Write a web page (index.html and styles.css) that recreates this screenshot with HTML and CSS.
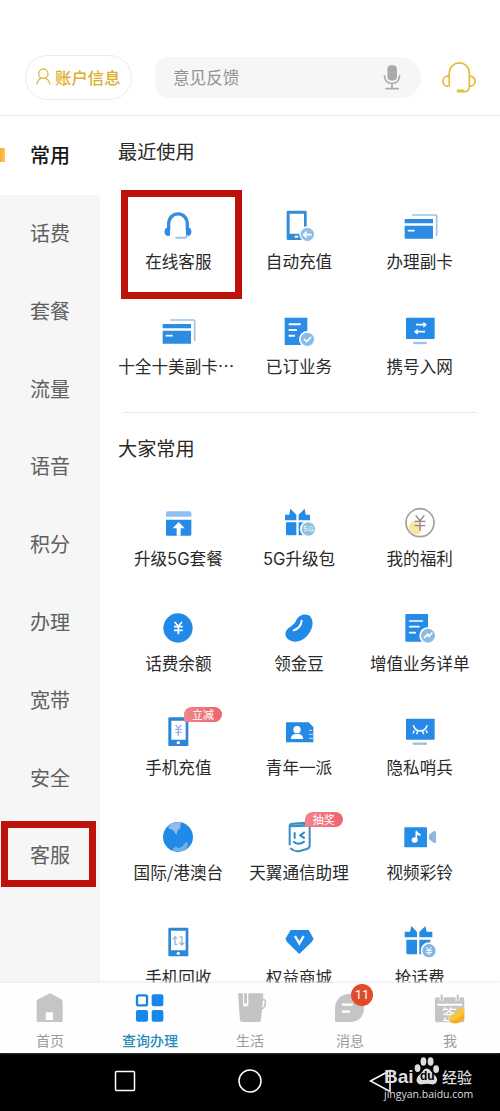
FILE: index.html
```html
<!DOCTYPE html>
<html lang="zh-CN">
<head>
<meta charset="utf-8">
<title>查询办理</title>
<link rel="stylesheet" href="styles.css">
</head>
<body>
<div class="phone">
  <header class="header">
    <div class="account">
      <svg class="account-icon" viewBox="0 0 45 54"><circle cx="22" cy="17" r="14"/><path d="M3 50C4 38 10 32 17 30M27 30C35 33 40 39 42 50"/></svg>
      <span>账户信息</span>
    </div>
    <div class="search">
      <span>意见反馈</span>
      <svg class="mic" viewBox="0 0 54 76"><rect x="13" y="1" width="29" height="46" rx="12" fill="#aaa"/><path d="M4 33C4 64 50 64 50 33M27 56V71M9 72H46" fill="none" stroke="#aaa" stroke-width="5" stroke-linecap="round"/></svg>
    </div>
    <svg class="service" viewBox="0 0 106 100"><path d="M25 78V38C25 -5 86 -5 86 38V77C86 91 78 93 69 93H48M25 45C-1 45 0 77 22 77M86 45C110 48 107 76 88 76M48 89H69" fill="none" stroke="#e0bd36" stroke-width="5"/></svg>
  </header>

  <main class="main">
    <nav class="side">
      <div class="side-item active">常用</div>
      <div class="side-item">话费</div>
      <div class="side-item">套餐</div>
      <div class="side-item">流量</div>
      <div class="side-item">语音</div>
      <div class="side-item">积分</div>
      <div class="side-item">办理</div>
      <div class="side-item">宽带</div>
      <div class="side-item">安全</div>
      <div class="side-item">客服<i class="mark mark-side"></i></div>
    </nav>

    <div class="content">
      <h2 class="title">最近使用</h2>
      <div class="grid">
        <div class="cell">
          <svg class="icon" viewBox="0 0 120 120"><path d="M32 72V55C32 13 88 13 88 55V72" fill="none" stroke="#398fdb" stroke-width="10"/><path d="M28 65C17 65 17 89 28 89H36V65ZM92 65C103 65 103 89 92 89H84V65Z" fill="#2b8ce6"/><path d="M90 88L82 95H52" fill="none" stroke="#9cc5eb" stroke-width="6"/></svg>
          <span>在线客服</span><i class="mark mark-cell"></i>
        </div>
        <div class="cell">
          <svg class="icon" viewBox="0 0 120 120"><path fill-rule="evenodd" d="M27 14H79Q83 14 83 18V102H27Q23 102 23 98V18Q23 14 27 14ZM32 23V83H75V23Z" fill="#348bd7"/><path d="M47 92H58" stroke="#fff" stroke-width="6"/><circle cx="85" cy="85" r="24" fill="#fff"/><circle cx="85" cy="85" r="20" fill="#91bfe6"/><path d="M98 86H75M83 77L74 86L83 94" fill="none" stroke="#fff" stroke-width="5"/></svg>
          <span>自动充值</span>
        </div>
        <div class="cell">
          <svg class="icon" viewBox="0 0 120 120"><path d="M14 39H99V52H14ZM14 59H99V98H14Z" fill="#2d8be3"/><path d="M36 27H107Q110 27 110 31V89" fill="none" stroke="#9bc4e8" stroke-width="5"/><path d="M23 74H44" stroke="#fff" stroke-width="5"/></svg>
          <span>办理副卡</span>
        </div>
        <div class="cell">
          <svg class="icon" viewBox="0 0 120 120"><path d="M14 39H99V52H14ZM14 59H99V98H14Z" fill="#2d8be3"/><path d="M36 27H107Q110 27 110 31V89" fill="none" stroke="#9bc4e8" stroke-width="5"/><path d="M23 74H44" stroke="#fff" stroke-width="5"/></svg>
          <span class="clipped">十全十美副卡…</span>
        </div>
        <div class="cell">
          <svg class="icon" viewBox="0 0 120 120"><rect x="17" y="20" width="68" height="82" rx="2" fill="#2b8de8"/><path d="M29 40H65M29 57H54M29 74H48" stroke="#fff" stroke-width="6"/><circle cx="85" cy="85" r="25" fill="#fff"/><circle cx="85" cy="85" r="20" fill="#88bbe8"/><path d="M75 84L83 92L96 78" fill="none" stroke="#fff" stroke-width="5"/></svg>
          <span>已订业务</span>
        </div>
        <div class="cell">
          <svg class="icon" viewBox="0 0 120 120"><rect x="18" y="20" width="86" height="64" rx="2" fill="#268ae8"/><path d="M40 96H80" stroke="#98c2e9" stroke-width="7"/><path d="M48 41H74M46 62H75" stroke="#fff" stroke-width="5"/><path d="M70 32L81 41L70 50ZM53 53L42 62L53 71Z" fill="#fff"/></svg>
          <span>携号入网</span>
        </div>
      </div>
      <div class="divider"></div>
      <h2 class="title">大家常用</h2>
      <div class="grid">
        <div class="cell">
          <svg class="icon" viewBox="0 0 120 120"><path d="M29 25H95Q100 25 100 30V41H24V30Q24 25 29 25Z" fill="#8ebfee"/><path d="M24 50H100V94Q100 98 96 98H28Q24 98 24 94Z" fill="#258ae8"/><path d="M62 57L80 76H68V98H56V76H44Z" fill="#fff"/></svg>
          <span>升级<span class="wide">5G</span>套餐</span>
        </div>
        <div class="cell">
          <svg class="icon" viewBox="0 0 120 120"><path d="M18 35H31L34 17L52 35V52H18ZM59 35L77 17L80 35H93V52H59ZM21 58H52V97H26Q21 97 21 92ZM59 58H91V97H59Z" fill="#258ae8"/><circle cx="88" cy="78" r="25" fill="#fff"/><circle cx="88" cy="78" r="20" fill="#91bfe0"/><path d="M84 70H76V77Q86 74 85 81Q84 86 75 83M102 73Q92 66 90 78Q90 88 102 84V79H96" fill="none" stroke="#e8f5fb" stroke-width="3"/></svg>
          <span><span class="wide">5G</span>升级包</span>
        </div>
        <div class="cell">
          <svg class="icon" viewBox="0 0 120 120"><circle cx="60" cy="59" r="42" fill="#fff" stroke="#a2a09d" stroke-width="5"/><path d="M26 75C28 55 48 47 57 61C67 76 67 94 50 94C36 94 26 86 26 75Z" fill="#fee4a4"/><path d="M47 37L60 53L73 37M60 53V83M44 55H76M44 68H76" fill="none" stroke="#8a8884" stroke-width="4"/></svg>
          <span>我的福利</span>
        </div>
        <div class="cell">
          <svg class="icon" viewBox="0 0 120 120"><circle cx="60" cy="60" r="44" fill="#218ae9"/><path d="M50 42L61 55L72 42M61 54V79M48 56H74M48 67H74" fill="none" stroke="#fff" stroke-width="5"/></svg>
          <span>话费余额</span>
        </div>
        <div class="cell">
          <svg class="icon" viewBox="0 0 120 120"><path d="M53 34C63 17 84 16 95 27C107 43 99 68 84 84C69 100 48 106 32 97C18 90 15 73 26 63C36 54 47 51 53 34Z" fill="#218ae9"/><path d="M68 38Q67 59 44 67" fill="none" stroke="#fff" stroke-width="6" stroke-linecap="round"/></svg>
          <span>领金豆</span>
        </div>
        <div class="cell">
          <svg class="icon" viewBox="0 0 120 120"><rect x="16" y="18" width="68" height="83" rx="2" fill="#268be7"/><path d="M29 39H67M29 56H57M29 74H46" stroke="#fff" stroke-width="5" stroke-linecap="round"/><circle cx="84" cy="83" r="26" fill="#fff"/><circle cx="84" cy="83" r="21" fill="#8bbbe1"/><path d="M72 90L83 79L87 85L97 74" fill="none" stroke="#fff" stroke-width="5"/></svg>
          <span>增值业务详单</span>
        </div>
        <div class="cell">
          <svg class="icon" viewBox="0 0 120 120"><path fill-rule="evenodd" d="M34 16H88Q91 16 91 19V102H34Q31 102 31 99V19Q31 16 34 16ZM40 26V83H83V26Z" fill="#2c86d3"/><circle cx="61" cy="92" r="5" fill="#fff"/><path d="M53 39L61 49L70 39M61 49V71M52 52H71M52 61H71" fill="none" stroke="#9dafea" stroke-width="4"/></svg>
          <b class="badge">立减</b>
          <span>手机充值</span>
        </div>
        <div class="cell">
          <svg class="icon" viewBox="0 0 120 120"><path d="M21 31H89L103 45V91H21Z" fill="#2689e4"/><circle cx="54" cy="53" r="11" fill="#fff"/><path d="M35 81Q37 68 48 66H60Q71 68 73 81Z" fill="#fff"/><path d="M90 55H99M90 67H103M90 79H103" stroke="#9ed0f4" stroke-width="4"/></svg>
          <span>青年一派</span>
        </div>
        <div class="cell">
          <svg class="icon" viewBox="0 0 120 120"><rect x="18" y="20" width="86" height="63" rx="2" fill="#2689e7"/><path d="M38 95H81" stroke="#98bfdf" stroke-width="7"/><path d="M40 40Q45 57 60 57Q76 57 82 40M43 56L39 64M53 58L50 67M68 58L71 67M78 55L82 63" fill="none" stroke="#fff" stroke-width="4.5"/></svg>
          <span>隐私哨兵</span>
        </div>
        <div class="cell">
          <svg class="icon" viewBox="0 0 120 120"><circle cx="60" cy="60" r="45" fill="#218ae9"/><path d="M35 23Q47 14 69 16L66 35L60 38L55 53L45 39L31 34Z" fill="#93bdeb"/><path d="M41 99L54 88L61 94L72 89L84 74L91 82L85 97Q65 109 41 99Z" fill="#72aeea"/></svg>
          <span>国际/港澳台</span>
        </div>
        <div class="cell">
          <svg class="icon" viewBox="0 0 120 120"><path d="M32 85V25Q33 21 39 20L79 17Q92 18 92 27V87Q91 94 83 96L63 102Q48 106 34 94" fill="none" stroke="#398dc0" stroke-width="6"/><path d="M34 27L84 25" stroke="#398dc0" stroke-width="8"/><path d="M47 46V65M77 45L64 55L77 64M43 73Q56 88 77 73" fill="none" stroke="#258acb" stroke-width="6"/></svg>
          <b class="badge">抽奖</b>
          <span>天翼通信助理</span>
        </div>
        <div class="cell">
          <svg class="icon" viewBox="0 0 120 120"><rect x="13" y="31" width="68" height="60" rx="2" fill="#278be8"/><path d="M87 53L102 41Q108 41 108 46V74Q108 79 102 78L87 67Z" fill="#8bb8e3"/><path d="M49 43V68" stroke="#fff" stroke-width="5"/><path d="M49 40Q53 48 62 51V57Q52 55 49 50Z" fill="#fff"/><ellipse cx="44" cy="69" rx="9" ry="8" fill="#fff"/></svg>
          <span>视频彩铃</span>
        </div>
        <div class="cell">
          <svg class="icon" viewBox="0 0 120 120"><path fill-rule="evenodd" d="M34 17H88Q91 17 91 20V103H34Q31 103 31 100V20Q31 17 34 17ZM39 26V85H83V26Z" fill="#2c87d9"/><circle cx="61" cy="94" r="5" fill="#fff"/><path d="M51 47V67H58M44 52L51 44L57 50M65 45H72V67M64 61L71 69L79 62" fill="none" stroke="#9eb6cf" stroke-width="4"/></svg>
          <span>手机回收</span>
        </div>
        <div class="cell">
          <svg class="icon" viewBox="0 0 120 120"><path d="M35 24H89L103 49Q103 54 98 60L61 96L24 60Q20 54 20 49Z" fill="#218ae9"/><path d="M48 42L61 64L74 42" fill="none" stroke="#fff" stroke-width="7"/></svg>
          <span>权益商城</span>
        </div>
        <div class="cell">
          <svg class="icon" viewBox="0 0 120 120"><path d="M14 29H30L34 12L51 30V46H14ZM58 30L76 12L80 29H97V46H58ZM19 53H51V97H24Q19 97 19 92ZM58 53H91V97H58Z" fill="#278be4"/><circle cx="87" cy="86" r="25" fill="#fff"/><circle cx="87" cy="86" r="20" fill="#84b6e3"/><path d="M79 75L87 84L95 75M87 84V99M78 85H96M78 92H96" fill="none" stroke="#fff" stroke-width="3"/></svg>
          <span>抢话费</span>
        </div>
      </div>
    </div>
  </main>

  <nav class="tabs">
    <div class="tab">
      <svg class="icon" viewBox="0 0 120 120"><path fill-rule="evenodd" d="M60 16L94 34Q98 37 98 42V99Q98 102 94 102H24Q20 102 20 99V42Q20 37 24 34ZM47 73V96H69V73Z" fill="#c5c5c5"/></svg>
      <span>首页</span>
    </div>
    <div class="tab current">
      <svg class="icon" viewBox="0 0 120 120"><rect x="21" y="22" width="30" height="30" rx="5" fill="#fff" stroke="#1c83df" stroke-width="7"/><g fill="#1687ec"><rect x="65" y="19" width="35" height="36" rx="6"/><rect x="18" y="66" width="36" height="35" rx="6"/><rect x="65" y="66" width="35" height="35" rx="6"/></g></svg>
      <span>查询办理</span>
    </div>
    <div class="tab">
      <svg class="icon" viewBox="0 0 120 120"><path d="M24 18Q24 16 28 16H39V52Q47 60 55 52V16H95Q100 16 100 21L93 97Q92 102 87 102H36Q31 102 30 97Z" fill="#c4c4c4"/><path d="M42 16H51V44Q46 50 42 44Z" fill="#c4c4c4"/><path d="M97 34Q107 33 106 44Q106 60 95 62" fill="none" stroke="#c4c4c4" stroke-width="5"/></svg>
      <span>生活</span>
    </div>
    <div class="tab">
      <svg class="icon" viewBox="0 0 120 120"><path d="M15 98V62C15 36 32 18 58 18C86 18 102 36 102 59C102 87 85 102 59 102H19Q15 102 15 98Z" fill="#c5c5c5"/><path d="M36 50H68M36 71H60" stroke="#fff" stroke-width="7"/></svg>
      <b class="count">11</b>
      <span>消息</span>
    </div>
    <div class="tab">
      <svg class="icon" viewBox="0 0 120 120"><path fill-rule="evenodd" d="M20 28H98Q103 28 103 33V98Q103 103 98 103H20Q15 103 15 98V33Q15 28 20 28ZM22 47V53H96V47Z" fill="#c5c5c5"/><path d="M35 20V38M83 20V38" stroke="#fff" stroke-width="12"/><path d="M35 20V38M83 20V38" stroke="#bdbdbd" stroke-width="6"/><path d="M46 58L39 69M43 64H55M64 58L58 69M62 64H78M57 70L40 81M57 70L76 80M48 80H66M43 89L47 96M57 87L59 95M72 85L65 97M39 98H77" fill="none" stroke="#fff" stroke-width="4"/><path d="M58 91C59 79 72 82 80 70C88 58 103 58 103 64V92Q91 109 69 106C59 104 57 99 58 91Z" fill="#fbc23c"/><path d="M60 96Q80 101 102 77V93Q88 108 68 105Z" fill="#f2ad2d"/></svg>
      <span>我</span>
    </div>
  </nav>

  <footer class="system">
    <svg class="key" viewBox="0 0 24 24"><rect x="2.5" y="2.5" width="19" height="19" rx="1"/></svg>
    <svg class="key" viewBox="0 0 24 24"><circle cx="12" cy="12" r="11"/></svg>
    <svg class="key key-back" viewBox="0 0 24 24"><path d="M1.5 12L21 1.5V22.5Z"/></svg>
    <div class="watermark">
      <div class="brand">
        <span class="latin">Bai</span>
        <span class="paw"><svg viewBox="0 0 78 86"><g fill="#ddd"><ellipse cx="10" cy="34" rx="9" ry="12"/><ellipse cx="28" cy="14" rx="9" ry="13"/><ellipse cx="50" cy="14" rx="9" ry="13"/><ellipse cx="67" cy="37" rx="9" ry="12"/><path d="M38 35C49 35 53 49 65 58C77 72 66 86 53 84Q38 80 24 84C9 86 1 70 12 58C25 49 27 35 38 35Z"/></g></svg><em>du</em></span>
        <span class="han">经验</span>
      </div>
      <div class="url">jingyan.baidu.com</div>
    </div>
  </footer>
</div>
</body>
</html>
```
FILE: styles.css
```css
* { box-sizing: border-box; }

body {
  margin: 0;
  background: #fff;
  color: #2a2a2a;
  font-family: "Noto Sans CJK SC", sans-serif;
}

.phone {
  display: flex;
  flex-direction: column;
  width: 500px;
  height: 1111px;
  overflow: hidden;
}

.header {
  display: flex;
  flex: none;
  align-items: center;
  height: 116px;
  padding: 40px 24px 0 25px;
  border-bottom: 1px solid #ebebeb;
}

.account {
  display: flex;
  align-items: center;
  gap: 4px;
  width: 107px;
  height: 45px;
  padding: 0 0 1px 10px;
  border: 1px solid #ececec;
  border-radius: 23px;
  color: #dcae2b;
  font-size: 16.4px;
  font-weight: 500;
  white-space: nowrap;
}

.account-icon {
  width: 15px;
  height: 18px;
  fill: none;
  stroke: #dfb94a;
  stroke-width: 4;
}

.search {
  display: flex;
  align-items: center;
  justify-content: space-between;
  width: 266px;
  height: 41px;
  margin-left: 23px;
  padding: 0 20px 1px 18px;
  border-radius: 14px 21px 21px 14px;
  background: #f6f6f6;
  color: #929292;
  font-size: 16.6px;
}

.mic { width: 18px; height: 25px; }

.service {
  width: 35px;
  height: 33px;
  margin-left: 20px;
}

.main {
  display: flex;
  flex: none;
  height: 867px;
  overflow: hidden;
}

.side {
  flex: none;
  width: 100px;
  background: #f6f6f6;
}

.side-item {
  position: relative;
  height: 77.8px;
  color: #606060;
  font-size: 20px;
  line-height: 75px;
  text-align: center;
}

.side-item.active {
  height: 79px;
  background: #fff;
  color: #171717;
  font-weight: 500;
  line-height: 78px;
}

.side-item.active::before {
  content: "";
  position: absolute;
  top: 32px;
  left: 0;
  width: 5px;
  height: 14px;
  background: linear-gradient(90deg, #f6ad2e, #fdc65f);
}

.mark {
  position: absolute;
  border: 7px solid #bd120b;
}

.mark-side {
  top: 4px;
  left: 1px;
  width: 95px;
  height: 66px;
}

.mark-cell {
  top: -16px;
  left: 3px;
  width: 121px;
  height: 109px;
}

.content {
  flex: 1;
  padding: 20px 19px 0 18px;
}

.title {
  margin: 0;
  font-size: 19.2px;
  font-weight: 400;
  line-height: 30px;
}

.grid {
  display: grid;
  grid-template-columns: repeat(3, 120.7px);
  row-gap: 36.8px;
  margin-top: 40px;
}

.cell {
  position: relative;
  display: flex;
  flex-direction: column;
  align-items: center;
  gap: 3px;
  height: 68px;
  font-size: 16.6px;
  line-height: 24px;
  white-space: nowrap;
}

.clipped { margin-right: 4px; }

.wide { font-family: "Inter", sans-serif; }

.icon {
  flex: none;
  width: 40px;
  height: 40px;
}

.divider {
  height: 1px;
  margin: 33px 4px 20px 5px;
  background: #e6e6e6;
}

.badge {
  position: absolute;
  top: -5px;
  left: 66px;
  width: 38px;
  height: 15px;
  border-radius: 8px 8px 8px 2px;
  background: linear-gradient(90deg, #f2858b, #ee646c);
  color: #fff;
  font-size: 11px;
  font-weight: 400;
  line-height: 14px;
  text-align: center;
}

.tabs {
  display: grid;
  flex: none;
  grid-template-columns: repeat(5, 100px);
  height: 70px;
  padding-top: 5px;
  background: #fefefe;
  box-shadow: 0 -1px 3px #ececec;
  z-index: 1;
}

.tab {
  position: relative;
  display: flex;
  flex-direction: column;
  align-items: center;
  gap: 2px;
  color: #9b9b9b;
  font-size: 14px;
  line-height: 20px;
}

.tab.current {
  color: #258db9;
  font-weight: 500;
}

.count {
  position: absolute;
  top: -4px;
  left: 51px;
  width: 22px;
  height: 22px;
  border-radius: 50%;
  background: #e14a2b;
  color: #fff;
  font: 13px/22px "Roboto", sans-serif;
  text-align: center;
}

.system {
  position: relative;
  display: flex;
  flex: none;
  height: 58px;
  padding: 16px 0 0 113px;
  gap: 101px;
  background: #000;
}

.key {
  width: 24px;
  height: 24px;
  fill: none;
  stroke: #fff;
  stroke-width: 1.5;
}

.key-back { margin-left: 6px; }

.watermark {
  position: absolute;
  top: 4px;
  left: 384px;
  width: 90px;
  color: #ddd;
}

.brand {
  display: flex;
  align-items: flex-end;
  height: 28px;
}

.latin {
  width: 30px;
  font: bold 19px/16px "Liberation Sans", sans-serif;
}

.paw {
  position: relative;
  width: 26px;
  height: 28px;
}

.paw svg { width: 26px; height: 28px; }

.paw em {
  position: absolute;
  top: 12px;
  left: 6px;
  color: #000;
  font: bold 12px/15px "Liberation Sans", sans-serif;
}

.han {
  margin-left: 2px;
  font-size: 15px;
  font-weight: 500;
  line-height: 17px;
}

.url {
  margin-top: 2px;
  font: 10.5px/14px "Open Sans", sans-serif;
}
```
